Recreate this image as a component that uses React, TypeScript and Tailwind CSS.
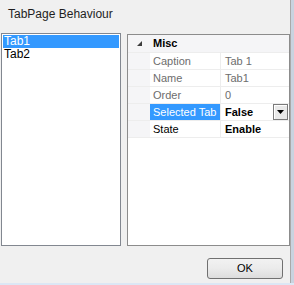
import React from "react";

const font = { fontFamily: '"Liberation Sans", Arial, sans-serif' };

type Prop = {
  name: string;
  value: string;
  readOnly?: boolean;
  selected?: boolean;
  dropdown?: boolean;
};

const props: Prop[] = [
  { name: "Caption", value: "Tab 1", readOnly: true },
  { name: "Name", value: "Tab1", readOnly: true },
  { name: "Order", value: "0", readOnly: true },
  { name: "Selected Tab", value: "False", selected: true, dropdown: true },
  { name: "State", value: "Enable" },
];

function PropRow({ p }: { p: Prop }) {
  return (
    <div className="flex h-[17px] border-b border-[#ededed]">
      <div className="w-[22px] shrink-0 bg-[#f5f5f7]" />
      <div
        className={`flex w-[70px] shrink-0 items-center pl-[3px] ${
          p.selected ? "bg-[#3399ff] text-white" : p.readOnly ? "text-[#6d6d6d]" : "text-black"
        }`}
      >
        {p.name}
      </div>
      <div className="w-px shrink-0 bg-[#ededed]" />
      <div
        className={`flex flex-1 items-center pl-[4px] ${
          p.readOnly ? "text-[#6d6d6d]" : "font-bold text-black"
        }`}
      >
        {p.value}
      </div>
      {p.dropdown && (
        <div className="mr-[1px] flex h-[16px] w-[15px] shrink-0 items-center justify-center border border-[#7a7a7a] bg-[#e9e9e9] shadow-[inset_1px_1px_0_#ffffff]">
          <svg width="7" height="4" viewBox="0 0 7 4">
            <polygon points="0,0 7,0 3.5,4" fill="#000" />
          </svg>
        </div>
      )}
    </div>
  );
}

export default function App() {
  return (
    <div className="flex h-[285px] w-[294px] flex-col bg-[#f0f0f0] text-[11px]" style={font}>
      <div className="flex h-[283px]">
        <div className="flex w-[290px] flex-col">
          <div className="pl-[8px] pt-[8px] text-[12px] leading-[13px] text-[#1e1e1e]">TabPage Behaviour</div>

          <div className="mt-[12px] flex h-[213px]">
            <div className="ml-[1px] w-[120px] border border-[#828790] bg-white p-[1px] leading-[13px]">
              <div className="h-[13px] bg-[#3399ff] pl-[1px] text-[12px] text-white">Tab1</div>
              <div className="h-[13px] pl-[1px] text-[12px] text-black">Tab2</div>
            </div>

            <div className="ml-[6px] mt-[1px] w-[163px] border border-[#8c8c8c] bg-white">
              <div className="flex h-[18px] items-center border-b border-[#ededed] bg-[#f5f5f7]">
                <div className="flex w-[22px] justify-center pl-[1px]">
                  <svg width="5" height="5" viewBox="0 0 5 5">
                    <polygon points="5,0 5,5 0,5" fill="#3c3c3c" />
                  </svg>
                </div>
                <span className="pl-[3px] font-bold text-black">Misc</span>
              </div>
              {props.map((p) => (
                <PropRow key={p.name} p={p} />
              ))}
            </div>
          </div>

          <div className="mt-[12px] flex justify-end pr-[7px]">
            <button className="h-[21px] w-[76px] rounded-[3px] border border-[#707070] bg-gradient-to-b from-[#f2f2f2] via-[#ebebeb] to-[#dcdcdc] text-black">
              OK
            </button>
          </div>
        </div>
        <div className="w-[4px] border-l border-[#a9a9a9] bg-[#c9d3df]" />
      </div>
      <div className="h-[2px] bg-[#dce7f5]" />
    </div>
  );
}
